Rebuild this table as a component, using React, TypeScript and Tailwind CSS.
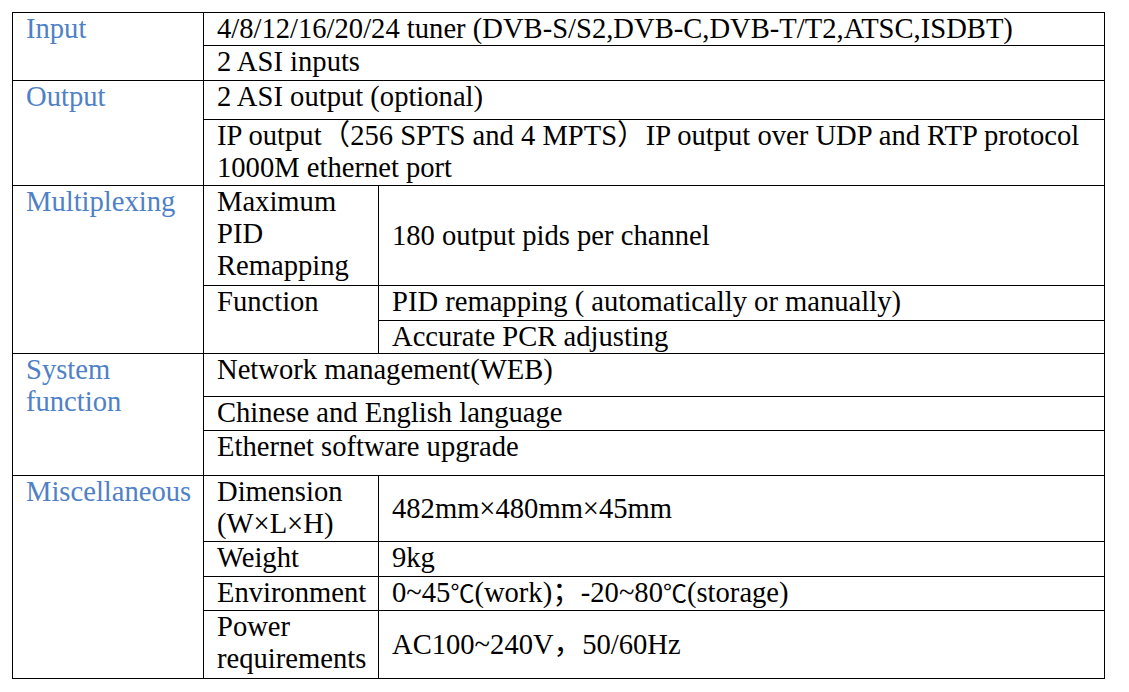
const serif = "font-['Liberation_Serif','Times_New_Roman','Noto_Sans_CJK_SC',serif]";

const label = "align-top border border-black pl-[13px] text-[#4f81c6]";
const cell = "align-top border border-black pl-[13px] text-black";
const mid = "align-middle border border-black pl-[13px] text-black";

export default function App() {
  return (
    <div className={`min-h-[692px] bg-white pt-[12px] pl-[12px] ${serif}`}>
      <table className="w-[1093px] table-fixed border-collapse text-[28.6px] leading-[32px]">
        <colgroup>
          <col className="w-[191px]" />
          <col className="w-[175px]" />
          <col />
        </colgroup>
        <tbody>
          {/* Input */}
          <tr className="h-[33px]">
            <td rowSpan={2} className={label}>Input</td>
            <td colSpan={2} className={cell}>4/8/12/16/20/24 tuner (DVB-S/S2,DVB-C,DVB-T/T2,ATSC,ISDBT)</td>
          </tr>
          <tr className="h-[35px]">
            <td colSpan={2} className={cell}>2 ASI inputs</td>
          </tr>

          {/* Output */}
          <tr className="h-[39px]">
            <td rowSpan={2} className={label}>Output</td>
            <td colSpan={2} className={cell}>2 ASI output (optional)</td>
          </tr>
          <tr className="h-[66px]">
            <td colSpan={2} className={cell}>
              IP output（256 SPTS and 4 MPTS）IP output over UDP and RTP protocol
              <br />
              1000M ethernet port
            </td>
          </tr>

          {/* Multiplexing */}
          <tr className="h-[100px]">
            <td rowSpan={3} className={label}>Multiplexing</td>
            <td className={cell}>
              Maximum
              <br />
              PID
              <br />
              Remapping
            </td>
            <td className={mid}>180 output pids per channel</td>
          </tr>
          <tr className="h-[35px]">
            <td rowSpan={2} className={cell}>Function</td>
            <td className={cell}>PID remapping ( automatically or manually)</td>
          </tr>
          <tr className="h-[33px]">
            <td className={cell}>Accurate PCR adjusting</td>
          </tr>

          {/* System function */}
          <tr className="h-[43px]">
            <td rowSpan={3} className={label}>
              System
              <br />
              function
            </td>
            <td colSpan={2} className={cell}>Network management(WEB)</td>
          </tr>
          <tr className="h-[34px]">
            <td colSpan={2} className={cell}>Chinese and English language</td>
          </tr>
          <tr className="h-[45px]">
            <td colSpan={2} className={cell}>Ethernet software upgrade</td>
          </tr>

          {/* Miscellaneous */}
          <tr className="h-[66px]">
            <td rowSpan={4} className={label}>Miscellaneous</td>
            <td className={cell}>
              Dimension
              <br />
              (W×L×H)
            </td>
            <td className={mid}>482mm×480mm×45mm</td>
          </tr>
          <tr className="h-[35px]">
            <td className={cell}>Weight</td>
            <td className={cell}>9kg</td>
          </tr>
          <tr className="h-[33px]">
            <td className={cell}>Environment</td>
            <td className={cell}>
              0~45<span className="text-[24px]">℃</span>(work)；-20~80<span className="text-[24px]">℃</span>(storage)
            </td>
          </tr>
          <tr className="h-[68px]">
            <td className={cell}>
              Power
              <br />
              requirements
            </td>
            <td className={mid}>AC100~240V，50/60Hz</td>
          </tr>
        </tbody>
      </table>
    </div>
  );
}
